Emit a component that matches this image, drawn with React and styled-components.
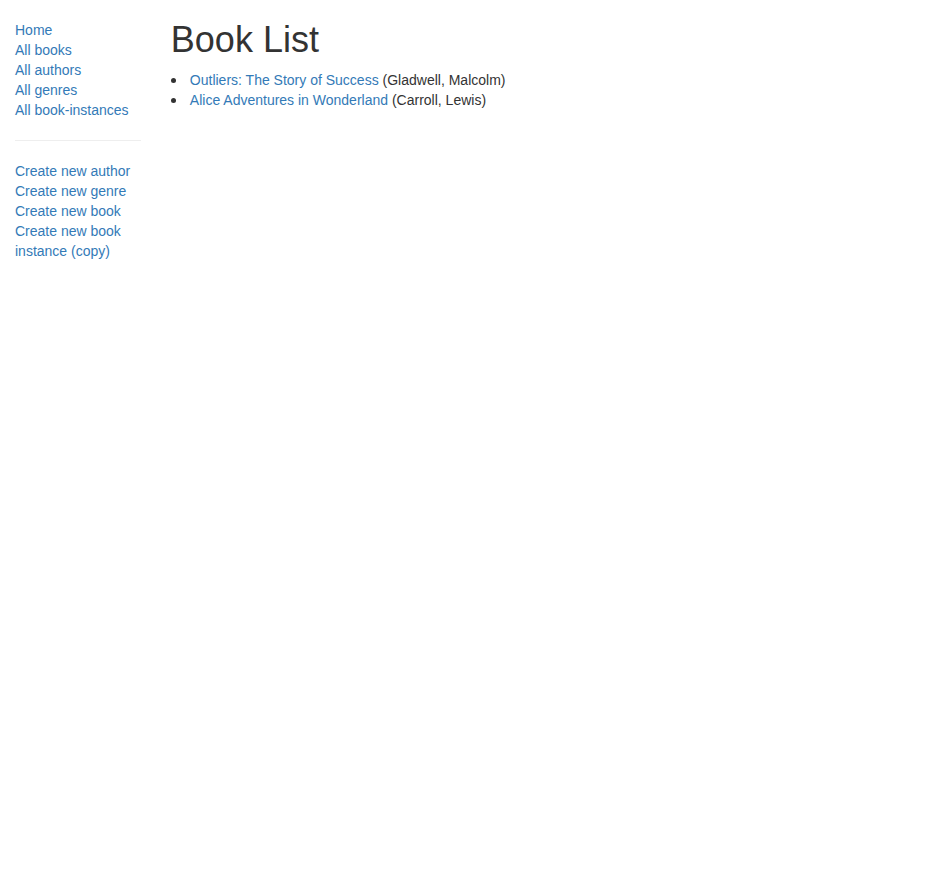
import React from "react";
import styled, { createGlobalStyle } from "styled-components";

const Global = createGlobalStyle`
  html, body { margin: 0; padding: 0; background: #fff; }
  body {
    font-family: "Liberation Sans", Arial, Helvetica, sans-serif;
    font-size: 14px;
    line-height: 1.42857143;
    color: #333;
  }
  * { box-sizing: border-box; }
`;

const Container = styled.div`
  padding: 0 15px;
`;

const Row = styled.div`
  display: flex;
  margin: 0 -15px;
`;

const Col = styled.div`
  width: ${(p) => p.$w};
  padding: 0 15px;
  min-height: 1px;
`;

const SideNav = styled.ul`
  margin: 20px 0 10px;
  padding: 0;
  list-style: none;
`;

const Link = styled.a`
  color: #337ab7;
  text-decoration: none;
`;

const Rule = styled.hr`
  margin: 20px 0;
  border: 0;
  border-top: 1px solid #eee;
  height: 0;
`;

const Title = styled.h1`
  font-size: 36px;
  font-weight: 500;
  line-height: 1.1;
  margin: 20px 0 10px;
  color: #333;
`;

const BookUl = styled.ul`
  margin: 0 0 10px;
  padding: 0;
  list-style: none;
`;

const BookItem = styled.li`
  display: flex;
  align-items: flex-start;
`;

const Marker = styled.span`
  flex: 0 0 19px;
  height: 20px;
  display: flex;
  align-items: center;
  &::before {
    content: "";
    width: 5px;
    height: 5px;
    border-radius: 50%;
    background: #333;
    margin-top: 1px;
  }
`;

const side1 = ["Home", "All books", "All authors", "All genres", "All book-instances"];
const side2 = ["Create new author", "Create new genre", "Create new book", "Create new book instance (copy)"];

const books = [
  { title: "Outliers: The Story of Success", author: "Gladwell, Malcolm" },
  { title: "Alice Adventures in Wonderland", author: "Carroll, Lewis" },
];

export default function App() {
  return (
    <>
      <Global />
      <Container>
        <Row>
          <Col $w="16.66666667%">
            <SideNav>
              {side1.map((s) => (
                <li key={s}><Link href="#">{s}</Link></li>
              ))}
              <li><Rule /></li>
              {side2.map((s) => (
                <li key={s}><Link href="#">{s}</Link></li>
              ))}
            </SideNav>
          </Col>
          <Col $w="83.33333333%">
            <Title>Book List</Title>
            <BookUl>
              {books.map((b) => (
                <BookItem key={b.title}>
                  <Marker />
                  <span>
                    <Link href="#">{b.title}</Link> ({b.author})
                  </span>
                </BookItem>
              ))}
            </BookUl>
          </Col>
        </Row>
      </Container>
    </>
  );
}
